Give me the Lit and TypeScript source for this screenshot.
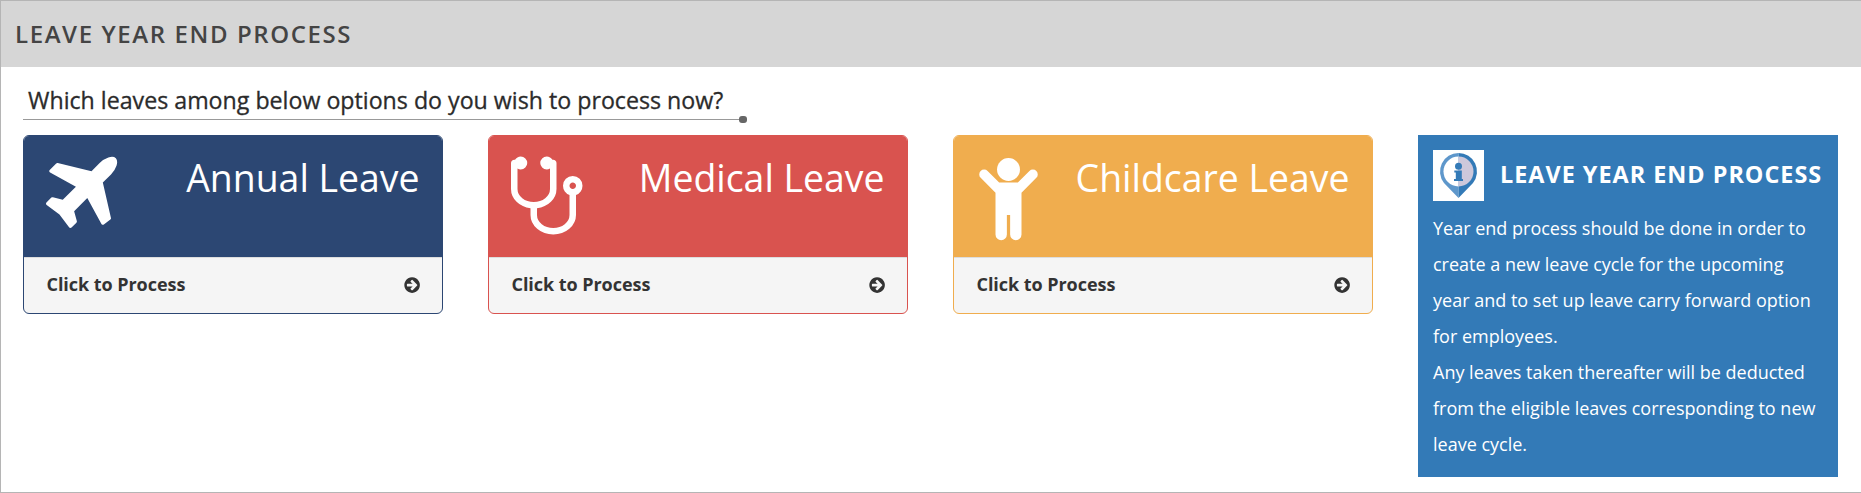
import { LitElement, html, css, svg } from "lit";
import { customElement, property } from "lit/decorators.js";

const icons: Record<string, { box: string; width: number; shape: unknown }> = {
  plane: {
    box: "192 0 1408 1792",
    width: 71.5,
    shape: svg`<path d="M1568 160q44 52 12 148t-108 172l-161 161 160 696q5 19-12 33l-128 96q-7 6-19 6-4 0-7-1-15-3-21-16l-279-508-259 259 53 194q5 17-8 31l-96 96q-9 9-23 9h-2q-15-2-24-13l-189-252-252-189q-11-7-13-23-1-13 9-25l96-97q9-9 23-9 6 0 8 1l194 53 259-259-508-279q-14-8-17-24-2-16 9-27l128-128q14-13 30-8l665 159 160-160q76-76 172-108t148 12z"/>`,
  },
  stethoscope: {
    box: "192 0 1408 1792",
    width: 71.5,
    shape: svg`<path d="M1472 704q0-26-19-45t-45-19-45 19-19 45 19 45 45 19 45-19 19-45zm128 0q0 62-35.500 111t-92.500 70v395q0 159-131.500 271.500t-316.500 112.500-316.500-112.500-131.500-271.500v-132q-164-20-274-128t-110-252v-512q0-26 19-45t45-19q6 0 16 2 17-30 47-48t65-18q53 0 90.500 37.500t37.500 90.500-37.500 90.500-90.500 37.500q-33 0-64-18v402q0 106 94 181t226 75 226-75 94-181v-402q-31 18-64 18-53 0-90.500-37.500t-37.500-90.500 37.500-90.500 90.500-37.500q35 0 65 18t47 48q10-2 16-2 26 0 45 19t19 45v512q0 144-110 252t-274 128v132q0 106 94 181t226 75 226-75 94-181v-395q-57-21-92.500-70t-35.500-111q0-80 56-136t136-56 136 56 56 136z"/>`,
  },
  child: {
    box: "0 0 1280 1792",
    width: 65,
    shape: svg`<path d="M1188 548l-292 292v824q0 46-33 79t-79 33-79-33-33-79v-384h-64v384q0 46-33 79t-79 33-79-33-33-79v-824l-292-292q-28-28-28-68t28-68 68-28 68 28l228 228h368l228-228q28-28 68-28t68 28 28 68-28 68z"/><circle cx="640" cy="384" r="226"/>`,
  },
};

@customElement("leave-card")
class LeaveCard extends LitElement {
  @property() label = "";
  @property() icon = "plane";

  static styles = css`
    :host {
      display: flex;
      flex-direction: column;
      box-sizing: border-box;
      height: 179px;
      border: 1px solid var(--tone);
      border-radius: 6px;
      overflow: hidden;
      background: #f5f5f5;
    }
    .head {
      box-sizing: border-box;
      height: 121px;
      padding: 14px 22.5px 0 22px;
      display: flex;
      justify-content: space-between;
      background: var(--tone);
      color: #fff;
    }
    .icon {
      height: 91px;
      fill: currentColor;
    }
    .label {
      font-size: 37.4px;
      line-height: 55px;
      white-space: nowrap;
    }
    .foot {
      flex: 1;
      border-top: 1px solid #ddd;
      padding: 0 21px 0 22.5px;
      display: flex;
      align-items: center;
      justify-content: space-between;
      font-size: 18px;
      font-weight: 700;
      color: #333;
    }
    .foot-text {
      padding-bottom: 3px;
      letter-spacing: -0.05px;
    }
    .arrow {
      width: 18.2px;
      height: 18.2px;
      fill: #333;
    }
  `;

  render() {
    const icon = icons[this.icon];
    return html`
      <div class="head">
        <svg class="icon" viewBox=${icon.box} width=${icon.width}>${icon.shape}</svg>
        <div class="label">${this.label}</div>
      </div>
      <div class="foot">
        <span class="foot-text">Click to Process</span>
        <svg class="arrow" viewBox="0 0 1792 1792">
          <path d="M1413 896q0-27-18-45l-91-91-362-362q-18-18-45-18t-45 18l-91 91q-18 18-18 45t18 45l189 189h-502q-26 0-45 19t-19 45v128q0 26 19 45t45 19h502l-189 189q-19 19-19 45t19 45l91 91q18 18 45 18t45-18l362-362 91-91q18-18 18-45zm251 0q0 209-103 385.500t-279.500 279.500-385.500 103-385.500-103-279.500-279.500-103-385.500 103-385.500 279.500-279.500 385.500-103 385.500 103 279.500 279.500 103 385.500z"/>
        </svg>
      </div>
    `;
  }
}

@customElement("app-root")
class AppRoot extends LitElement {
  static styles = css`
    :host {
      display: block;
      box-sizing: border-box;
      height: 493px;
      border: 1px solid #b5b5b5;
      border-right: 0;
      background: #fff;
      color: #2b2b2b;
      font-family: "Open Sans", "Noto Sans", sans-serif;
    }
    .bar {
      box-sizing: border-box;
      height: 66px;
      padding: 0 0 2px 14px;
      display: flex;
      align-items: center;
      background: #d6d6d6;
      color: #444;
      font-size: 24px;
      font-weight: 600;
      letter-spacing: 1.6px;
    }
    .question {
      margin: 15px 0 0 22px;
      width: 724px;
    }
    .question-text {
      padding-left: 5px;
      height: 33px;
      line-height: 36px;
      font-size: 23.2px;
      -webkit-text-stroke: 0.3px currentColor;
      white-space: nowrap;
    }
    .rule {
      display: flex;
      align-items: center;
      height: 8px;
    }
    .line {
      flex: 1;
      height: 1px;
      background: #999;
    }
    .dot {
      width: 8px;
      height: 7px;
      border-radius: 3px;
      background: #666;
    }
    .columns {
      margin: 12px 0 0 22px;
      display: grid;
      grid-template-columns: repeat(4, 420px);
      column-gap: 45px;
      align-items: start;
    }
    .annual { --tone: #2c4773; }
    .medical { --tone: #d9534f; }
    .childcare { --tone: #f0ad4e; }
    .info {
      box-sizing: border-box;
      height: 342px;
      padding: 15px 0 0 15px;
      background: #337ab7;
      color: #fff;
    }
    .info-head {
      display: flex;
      gap: 16px;
      height: 59px;
    }
    .pin {
      width: 51px;
      height: 51px;
      background: #fff;
    }
    .info-title {
      font-size: 23.4px;
      line-height: 49px;
      font-weight: 700;
      letter-spacing: 1px;
      white-space: nowrap;
    }
    .text {
      margin: 1px 0 0;
      font-size: 18px;
      line-height: 36px;
      white-space: nowrap;
    }
  `;

  render() {
    return html`
      <header class="bar">LEAVE YEAR END PROCESS</header>
      <div class="question">
        <div class="question-text">Which leaves among below options do you wish to process now?</div>
        <div class="rule"><span class="line"></span><span class="dot"></span></div>
      </div>
      <main class="columns">
        <leave-card class="annual" icon="plane" label="Annual Leave"></leave-card>
        <leave-card class="medical" icon="stethoscope" label="Medical Leave"></leave-card>
        <leave-card class="childcare" icon="child" label="Childcare Leave"></leave-card>
        <aside class="info">
          <div class="info-head">
            <svg class="pin" viewBox="0 0 51 51">
              <path fill="#5e97cb" d="M25.500 3A18.500 18.500 0 0 0 11 33L25.500 48z"/>
              <path fill="#337ab7" d="M25.500 3A18.500 18.500 0 0 1 40 33L25.500 48z"/>
              <path fill="#fff" d="M25.500 6.500a15 15 0 0 0 0 30z"/>
              <path fill="#cdc8db" d="M25.500 6.500a15 15 0 0 1 0 30z"/>
              <circle cx="25.500" cy="16.200" r="3.500" fill="#337ab7"/>
              <path fill="#337ab7" d="M21.300 20.500h7.500v8.500h1.200v2h-9v-2h1.800v-6.500h-1.500z"/>
            </svg>
            <div class="info-title">LEAVE YEAR END PROCESS</div>
          </div>
          <p class="text">
            Year end process should be done in order to<br />create a new leave cycle for the upcoming<br />year and to set up leave carry forward option<br />for employees.<br />Any leaves taken thereafter will be deducted<br />from the eligible leaves corresponding to new<br />leave cycle.
          </p>
        </aside>
      </main>
    `;
  }
}
